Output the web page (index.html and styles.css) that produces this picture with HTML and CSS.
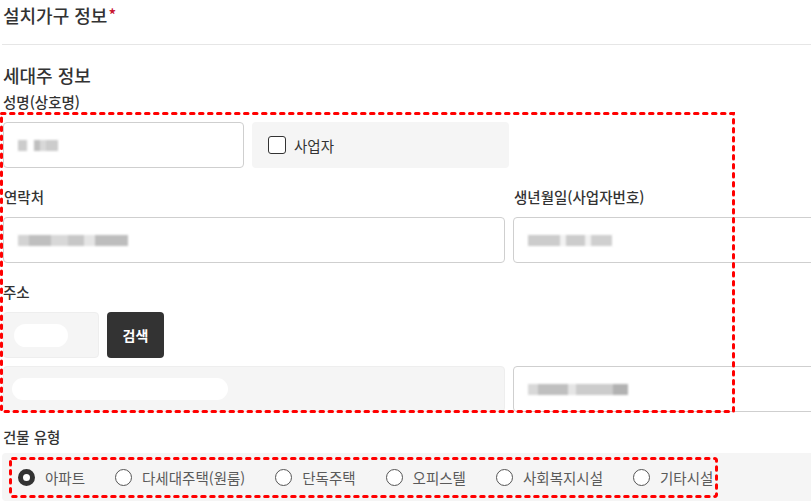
FILE: index.html
```html
<!DOCTYPE html>
<html lang="ko">
<head>
<meta charset="utf-8">
<title>설치가구 정보</title>
<link rel="stylesheet" href="styles.css">
</head>
<body>
<div class="page">
  <div class="head">
    <h2 class="title">설치가구 정보<span class="req">*</span></h2>
  </div>
  <h3 class="subtitle">세대주 정보</h3>

  <div class="field first">
    <label class="label">성명(상호명)</label>
    <div class="row">
      <div class="input name"><span class="blur b-name"></span></div>
      <div class="check-box">
        <span class="checkbox"></span>
        <span class="check-label">사업자</span>
      </div>
    </div>
  </div>

  <div class="cols">
    <div class="field">
      <label class="label">연락처</label>
      <div class="input wide"><span class="blur b-phone"></span></div>
    </div>
    <div class="field">
      <label class="label">생년월일(사업자번호)</label>
      <div class="input wide"><span class="blur b-birth"></span></div>
    </div>
  </div>

  <div class="field">
    <label class="label">주소</label>
    <div class="row">
      <div class="input gray post"><span class="pill p-post"></span></div>
      <button class="search">검색</button>
    </div>
    <div class="cols addr">
      <div class="input gray wide"><span class="pill p-addr"></span></div>
      <div class="input wide"><span class="blur b-detail"></span></div>
    </div>
  </div>

  <div class="field building">
    <label class="label">건물 유형</label>
    <div class="radios">
      <div class="radio-item"><span class="radio on"></span><span class="radio-label">아파트</span></div>
      <div class="radio-item"><span class="radio"></span><span class="radio-label">다세대주택(원룸)</span></div>
      <div class="radio-item"><span class="radio"></span><span class="radio-label">단독주택</span></div>
      <div class="radio-item"><span class="radio"></span><span class="radio-label">오피스텔</span></div>
      <div class="radio-item"><span class="radio"></span><span class="radio-label">사회복지시설</span></div>
      <div class="radio-item"><span class="radio"></span><span class="radio-label">기타시설</span></div>
    </div>
  </div>

  <svg class="mark mark-form" width="737" height="302" viewBox="0 0 737 302">
    <rect x="1.5" y="1.5" width="732" height="298" fill="none" stroke="#f00" stroke-width="3" stroke-dasharray="3.5 5.5" stroke-linecap="round"/>
  </svg>
  <svg class="mark mark-radio" width="710" height="42" viewBox="0 0 710 42">
    <rect x="1.5" y="1.5" width="706" height="38" rx="2" fill="none" stroke="#f00" stroke-width="3" stroke-dasharray="3.5 5.5" stroke-linecap="round"/>
  </svg>
</div>
</body>
</html>
```

FILE: styles.css
```css
html, body {
  margin: 0;
  padding: 0;
  background: #fff;
  overflow: hidden;
}
body {
  font-family: "Noto Sans CJK KR", "Noto Sans", sans-serif;
  color: #333;
}
.page {
  position: relative;
  width: 1013px;
  padding-left: 2px;
}
.head {
  height: 44px;
  border-bottom: 1px solid #e6e6e6;
}
.title {
  margin: 0;
  padding-left: 1px;
  font-size: 18px;
  font-weight: 500;
  line-height: 28px;
  color: #333;
}
.req {
  color: #c8102e;
  font-size: 16px;
  vertical-align: 2px;
  margin-left: 1px;
}
.subtitle {
  margin: 18px 0 0;
  padding-left: 1px;
  font-size: 18px;
  font-weight: 500;
  line-height: 24px;
  color: #333;
}
.field {
  margin-top: 19px;
}
.field.first {
  margin-top: 5px;
}
.label {
  display: block;
  padding-left: 1px;
  font-size: 14.5px;
  font-weight: 500;
  line-height: 20px;
  margin-bottom: 10px;
  color: #333;
}
.row {
  display: flex;
  gap: 8px;
  margin-left: 1px;
}
.cols {
  display: grid;
  grid-template-columns: 502px 502px;
  gap: 8px;
  margin-left: 1px;
}
.cols .field {
  margin-top: 19px;
}
.cols.addr {
  margin-top: 8px;
  margin-left: 1px;
}
.input {
  box-sizing: border-box;
  height: 46px;
  border: 1px solid #cfcfcf;
  border-radius: 4px;
  background: #fff;
  display: flex;
  align-items: center;
  padding-left: 14px;
}
.input.name { width: 241px; }
.input.wide { width: 100%; }
.input.gray {
  background: #f5f5f5;
  border-color: #eeeeee;
}
.input.post {
  width: 96px;
  padding-left: 10px;
}
.cols.addr .input.gray { padding-left: 8px; }
.check-box {
  box-sizing: border-box;
  width: 257px;
  height: 46px;
  border-radius: 4px;
  background: #f5f5f5;
  display: flex;
  align-items: center;
  padding-left: 16px;
  gap: 8px;
}
.checkbox {
  box-sizing: border-box;
  width: 18px;
  height: 18px;
  border: 1.6px solid #333;
  border-radius: 3px;
  background: #fff;
}
.check-label {
  font-size: 14.5px;
  color: #333;
}
.search {
  width: 57px;
  height: 46px;
  border: 0;
  border-radius: 4px;
  background: #333;
  color: #fff;
  font-family: "Noto Sans CJK KR", sans-serif;
  font-size: 14px;
  font-weight: 700;
  padding: 0;
}
.pill {
  display: block;
  height: 23px;
  background: #fff;
  border-radius: 12px;
}
.p-post { width: 54px; }
.p-addr { width: 216px; height: 22px; border-radius: 11px; }
.blur {
  display: block;
  height: 11px;
  filter: blur(1.2px);
  opacity: 0.75;
}
.b-name {
  width: 40px;
  background: linear-gradient(90deg, #bbb 0 22%, #fff 22% 40%, #aaa 40% 55%, #ccc 55% 70%, #bbb 70% 100%);
}
.b-phone {
  width: 110px;
  background: linear-gradient(90deg, #c5c5c5 0 10%, #aaa 10% 30%, #ccc 30% 45%, #b5b5b5 45% 60%, #ddd 60% 70%, #a8a8a8 70% 100%);
}
.b-birth {
  width: 84px;
  background: linear-gradient(90deg, #bbb 0 38%, #eee 38% 45%, #bbb 45% 68%, #eee 68% 75%, #c0c0c0 75% 100%);
}
.b-detail {
  width: 100px;
  background: linear-gradient(90deg, #ccc 0 10%, #aaa 10% 40%, #ddd 40% 48%, #bbb 48% 85%, #999 85% 100%);
}
.building { margin-top: 15px; }
.building .label { margin-bottom: 6px; }
.radios {
  box-sizing: border-box;
  height: 48px;
  background: #f5f5f5;
  border-radius: 4px;
  display: flex;
  align-items: center;
  gap: 30px;
  padding-left: 16px;
}
.radio-item {
  display: flex;
  align-items: center;
  gap: 10px;
}
.radio {
  box-sizing: border-box;
  width: 17px;
  height: 17px;
  border: 1.5px solid #555;
  border-radius: 50%;
  background: #fff;
}
.radio.on {
  border: 5px solid #333;
}
.radio-label {
  font-size: 14.5px;
  color: #5a5a5a;
}
.mark {
  position: absolute;
  display: block;
}
.mark-form { left: 0; top: 112px; }
.mark-radio { left: 9px; top: 457px; }
```
